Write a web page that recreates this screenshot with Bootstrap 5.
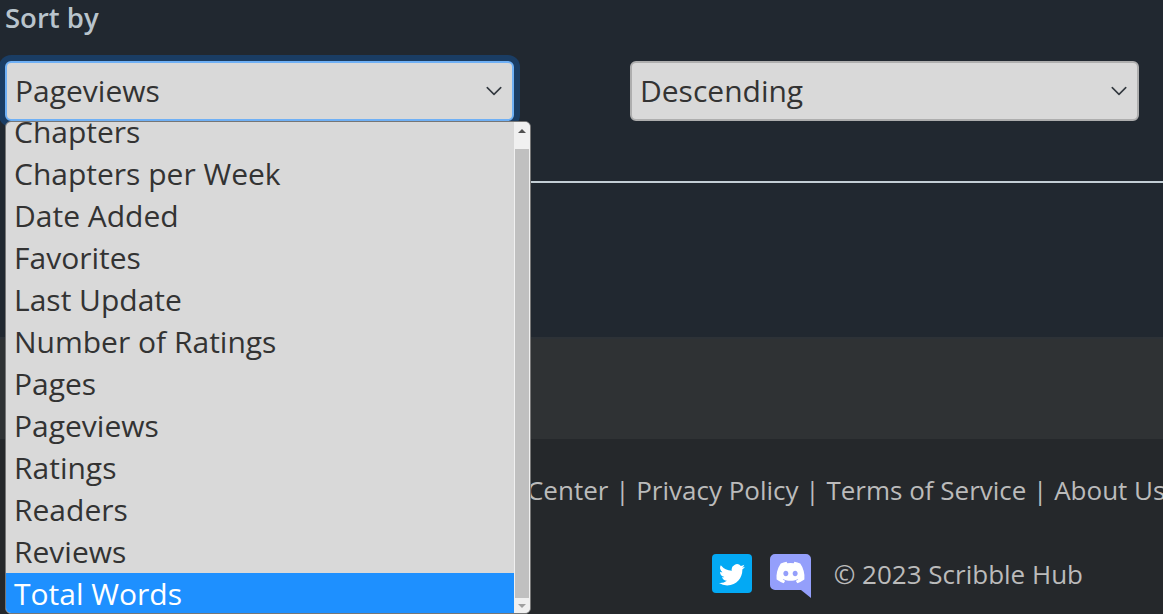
<!DOCTYPE html>
<html lang="en">
<head>
    <meta charset="UTF-8">
    <meta name="viewport" content="width=device-width, initial-scale=1.0">
    <title>Sort by</title>
    <link href="https://cdn.jsdelivr.net/npm/bootstrap@5.3.0/dist/css/bootstrap.min.css" rel="stylesheet">
    <style>
        html, body {
            height: 614px;
            overflow: hidden;
        }
        body {
            background-color: #212830;
            font-family: "Open Sans", sans-serif;
            position: relative;
        }
        .main-area {
            height: 337px;
            padding: 0 0 0 5px;
        }
        .sort-title {
            color: #b9c4cc;
            font-size: 27.5px;
            font-weight: 600;
            line-height: 36px;
            margin-bottom: 25px;
        }
        .sort-row {
            gap: 116px;
            margin-bottom: 60px;
        }
        .sort-select {
            --bs-form-select-bg-img: url("data:image/svg+xml,%3csvg xmlns='http://www.w3.org/2000/svg' viewBox='0 0 16 16'%3e%3cpath fill='none' stroke='%23343a40' stroke-linecap='round' stroke-linejoin='round' stroke-width='1.4' d='m2 5 6 6 6-6'/%3e%3c/svg%3e");
            width: 509px;
            height: 60px;
            padding: 0 40px 2px 8px;
            font-size: 30px;
            color: #333;
            background-color: #d9d9d9;
            border: 2px solid #aeaeae;
            border-radius: 6px;
            background-position: right 6px center;
            background-size: 24px 18px;
        }
        .sort-select:focus, .sort-select.is-open {
            border-color: #6fb0f5;
            box-shadow: 0 0 0 6px #1a3d64;
        }
        .rule-line {
            height: 2px;
            background: #c3ced5;
        }
        .footer-band {
            height: 102px;
            background: #2f3234;
            border-top: 2px solid #2d3237;
        }
        .footer-bottom {
            height: 175px;
            background: #25282b;
            color: #bbb;
            font-size: 26px;
        }
        .footer-links {
            white-space: nowrap;
            padding: 32px 0 0 464px;
            line-height: 38px;
        }
        .footer-social {
            padding: 45px 80px 0 0;
            gap: 18px;
        }
        .copy-text {
            margin-left: 5px;
            line-height: 40px;
        }
        .twitter-box {
            width: 40px;
            height: 39px;
            background: #03a9f4;
            border-radius: 4px;
        }
        .sort-menu {
            position: absolute;
            left: 5px;
            top: 121px;
            width: 526px;
            height: 493px;
            background: #d9d9d9;
            border: 1px solid #767676;
            border-radius: 6px;
            overflow: hidden;
        }
        .sort-options {
            margin-top: -10px;
            width: 508px;
            font-size: 30px;
        }
        .sort-options .list-group-item {
            height: 42px;
            line-height: 40px;
            padding: 0 0 0 8px;
            border: 0;
            border-radius: 0;
            background: transparent;
            color: #333;
        }
        .sort-options .list-group-item.active {
            line-height: 42px;
            background: #1e90ff;
            color: #fff;
        }
        .menu-scroll {
            position: absolute;
            top: 0;
            right: 0;
            bottom: 0;
            width: 16px;
            background: #f0f0f0;
        }
        .menu-thumb {
            position: absolute;
            left: 1px;
            right: 1px;
            top: 27px;
            height: 449px;
            background: #c0c0c0;
        }
        .arrow-up, .arrow-down {
            position: absolute;
            left: 4px;
            width: 0;
            height: 0;
            border-left: 4px solid transparent;
            border-right: 4px solid transparent;
        }
        .arrow-up {
            top: 7px;
            border-bottom: 4px solid #505050;
        }
        .arrow-down {
            bottom: 5px;
            border-top: 4px solid #a0a0a0;
        }
    </style>
</head>
<body>
    <div class="main-area">
        <div class="sort-title">Sort by</div>
        <div class="d-flex sort-row">
            <select class="form-select sort-select is-open">
                <option>Pageviews</option>
            </select>
            <select class="form-select sort-select">
                <option>Descending</option>
            </select>
        </div>
        <div class="rule-line"></div>
    </div>

    <div class="footer-band"></div>
    <div class="footer-bottom">
        <div class="footer-links">Help Center | Privacy Policy | Terms of Service | About Us</div>
        <div class="d-flex justify-content-end align-items-start footer-social">
            <div class="twitter-box d-flex align-items-center justify-content-center">
                <svg width="26" height="26" viewBox="0 0 16 16" fill="#fff"><path d="M5.026 15c6.038 0 9.341-5.003 9.341-9.334 0-.14 0-.282-.006-.422A6.685 6.685 0 0 0 16 3.542a6.658 6.658 0 0 1-1.889.518 3.301 3.301 0 0 0 1.447-1.817 6.533 6.533 0 0 1-2.087.793A3.286 3.286 0 0 0 7.875 6.03a9.325 9.325 0 0 1-6.767-3.429 3.289 3.289 0 0 0 1.018 4.382A3.323 3.323 0 0 1 .64 6.575v.045a3.288 3.288 0 0 0 2.632 3.218 3.203 3.203 0 0 1-.865.115 3.23 3.23 0 0 1-.614-.057 3.283 3.283 0 0 0 3.067 2.277A6.588 6.588 0 0 1 .78 13.58a6.32 6.32 0 0 1-.78-.045A9.344 9.344 0 0 0 5.026 15z"/></svg>
            </div>
            <svg width="41" height="44" viewBox="0 0 41 44">
                <path d="M5 0h31a5 5 0 0 1 5 5v39l-10-8H5a5 5 0 0 1-5-5V5a5 5 0 0 1 5-5z" fill="#949ffb"/>
                <g transform="translate(6.5 4.5) scale(1.75)"><path fill="#fff" d="M13.545 2.907a13.227 13.227 0 0 0-3.257-1.011.05.05 0 0 0-.052.025c-.141.25-.297.577-.406.833a12.19 12.19 0 0 0-3.658 0 8.258 8.258 0 0 0-.412-.833.051.051 0 0 0-.052-.025c-1.125.194-2.22.534-3.257 1.011a.041.041 0 0 0-.021.018C.356 6.024-.213 9.047.066 12.032c.001.014.01.028.021.037a13.276 13.276 0 0 0 3.995 2.02.05.05 0 0 0 .056-.019c.308-.42.582-.863.818-1.329a.05.05 0 0 0-.01-.059.051.051 0 0 0-.018-.011 8.875 8.875 0 0 1-1.248-.595.05.05 0 0 1-.02-.066.051.051 0 0 1 .015-.019c.084-.063.168-.129.248-.195a.05.05 0 0 1 .051-.007c2.619 1.196 5.454 1.196 8.041 0a.052.052 0 0 1 .053.007c.08.066.164.132.248.195a.051.051 0 0 1-.004.085 8.254 8.254 0 0 1-1.249.594.05.05 0 0 0-.03.03.052.052 0 0 0 .003.041c.24.465.515.909.817 1.329a.05.05 0 0 0 .056.019 13.235 13.235 0 0 0 4.001-2.02.049.049 0 0 0 .021-.037c.334-3.451-.559-6.449-2.366-9.106a.034.034 0 0 0-.02-.019Zm-8.198 7.307c-.789 0-1.438-.724-1.438-1.612 0-.889.637-1.613 1.438-1.613.807 0 1.45.73 1.438 1.613 0 .888-.637 1.612-1.438 1.612Zm5.316 0c-.788 0-1.438-.724-1.438-1.612 0-.889.637-1.613 1.438-1.613.807 0 1.451.73 1.438 1.613 0 .888-.631 1.612-1.438 1.612Z"/></g>
            </svg>
            <span class="copy-text">© 2023 Scribble Hub</span>
        </div>
    </div>

    <div class="sort-menu">
        <ul class="list-group sort-options">
            <li class="list-group-item">Chapters</li>
            <li class="list-group-item">Chapters per Week</li>
            <li class="list-group-item">Date Added</li>
            <li class="list-group-item">Favorites</li>
            <li class="list-group-item">Last Update</li>
            <li class="list-group-item">Number of Ratings</li>
            <li class="list-group-item">Pages</li>
            <li class="list-group-item">Pageviews</li>
            <li class="list-group-item">Ratings</li>
            <li class="list-group-item">Readers</li>
            <li class="list-group-item">Reviews</li>
            <li class="list-group-item active">Total Words</li>
        </ul>
        <div class="menu-scroll">
            <div class="arrow-up"></div>
            <div class="menu-thumb"></div>
            <div class="arrow-down"></div>
        </div>
    </div>
</body>
</html>
